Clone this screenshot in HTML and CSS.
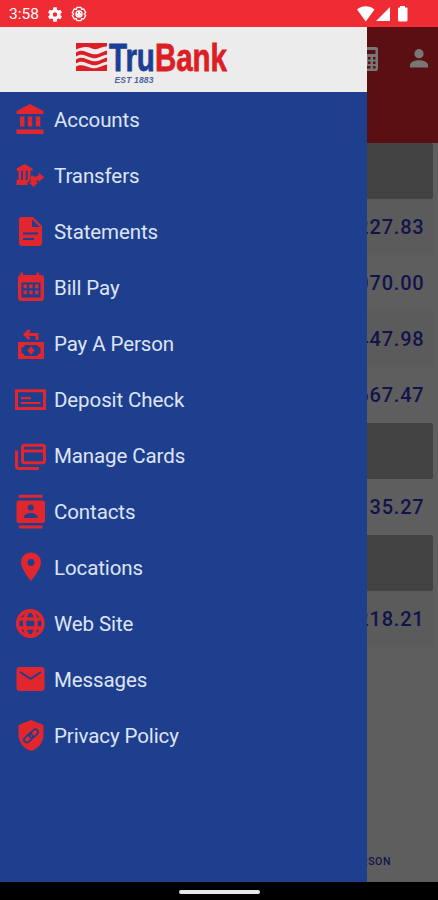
FILE: index.html
```html
<!DOCTYPE html>
<html lang="en">
<head>
    <meta charset="UTF-8">
    <meta name="viewport" content="width=device-width, initial-scale=1.0">
    <title>TruBank</title>
    <link rel="stylesheet" href="styles.css">
</head>
<body>
    <div class="phone">
        <!-- Status Bar -->
        <div class="status-bar">
            <span class="time">3:58</span>
            <svg class="gear" width="16" height="17" viewBox="1 1 22 22"><path fill-rule="evenodd" d="M19.4 13a7 7 0 0 0 0-2l2.2-1.700-2.200-4-2.800 1.100a8 8 0 0 0-1.800-1L14.400 2H9.600l-.4 3.400a8 8 0 0 0-1.800 1L4.600 5.300l-2.200 4L4.600 11a7 7 0 0 0 0 2l-2.200 1.700 2.200 4 2.800-1.100a8 8 0 0 0 1.800 1l.4 3.400h4.800l.4-3.400a8 8 0 0 0 1.800-1l2.800 1.100 2.200-4zM12 9a3 3 0 1 1 0 6 3 3 0 0 1 0-6z"/></svg>
            <svg class="gear second" width="16" height="16" viewBox="0 0 24 24"><path class="gear-line" d="M9 2h6l1 3 3-.5 3 5-2 2.500 2 2.500-3 5-3-.5-1 3H9l-1-3-3 .5-3-5L4 12 2 9.500l3-5 3 .5z"/><circle class="gear-line" cx="12" cy="12" r="4.500"/><path d="M12 7l3 5 2 2-5 1-5-1 3-3z"/></svg>
            <svg class="signals" width="52" height="16" viewBox="0 0 52 16"><path d="M0 3.500C5-.8 12.500-.8 17.500 3.500L8.800 15.500zM33 1v14H19zM43 1.500V0h5v1.500h1.500q1 0 1 1V14q0 1.500-1.500 1.500h-6.500Q41 15.500 41 14V2.500q0-1 1-1z"/></svg>
        </div>

        <div class="screen">
            <!-- Accounts page, dimmed behind the menu -->
            <div class="page">
                <div class="page-header">
                    <svg width="18" height="24" viewBox="0 0 18 24"><path fill-rule="evenodd" d="M2 0h14q2 0 2 2v20q0 2-2 2H2q-2 0-2-2V2q0-2 2-2zM2.500 3v4h13V3zM3 10v2.500h2.500V10zM8 10v2.500h2.500V10zM13 10v2.500h2.500V10zM3 14.500V17h2.500v-2.500zM8 14.500V17h2.500v-2.500zM13 14.500V17h2.500v-2.500zM3 19v2.500h7.500V19zM13 19v2.500h2.500V19z"/></svg>
                    <svg width="18" height="19" viewBox="0 0 18 19"><circle cx="9" cy="4.700" r="4.600"/><path d="M0 18.500v-2.300c0-3.200 5-5 9-5s9 1.800 9 5v2.300z"/></svg>
                </div>
                <div class="accounts">
                    <div class="group"></div>
                    <div class="account shaded">$4,227.83</div>
                    <div class="account">$1,070.00</div>
                    <div class="account shaded">$2,447.98</div>
                    <div class="account">$5,667.47</div>
                    <div class="group"></div>
                    <div class="account">$3,135.27</div>
                    <div class="group"></div>
                    <div class="account shaded">$8,218.21</div>
                </div>
                <div class="tab">PAY A PERSON</div>
            </div>

            <!-- Menu -->
            <div class="drawer">
                <div class="drawer-header">
                    <svg class="logo" width="153" height="42" viewBox="0 0 153 42">
                        <path class="flag" d="M0 0h31v3.500C25 3 22 8 16 5.500S6 4 0 6.500zM0 9.500c6-4 10 0 16 1.500s9-2 15-3.500v4c-6 1-9 5-15 3.500S6 9.500 0 13.500zM0 16.500c6-4 10 0 16 1.500s9-2 15-3.500v4c-6 1-9 5-15 3.500S6 16.500 0 20.500zM0 23.500c6-3 10 .500 16 1.500s9-2 15-3.500V28H0z"/>
                        <text class="brand" x="33" y="27.700" textLength="118" lengthAdjust="spacingAndGlyphs"><tspan class="tru">Tru</tspan><tspan class="bank">Bank</tspan></text>
                        <text class="est" x="38.500" y="39.500" textLength="39">EST 1883</text>
                    </svg>
                </div>
                <div class="menu">
                    <div class="item">
                        <svg class="icon" viewBox="0 0 32 36"><path d="M15 2l13.500 7v3h-27V9zM5 14.500h4.500v10H5zM12.800 14.500h4.500v10h-4.500zM20.800 14.500h4.500v10h-4.500zM1.500 27.500h27V32h-27z"/></svg>
                        <span>Accounts</span>
                    </div>
                    <div class="item">
                        <svg class="icon" viewBox="0 0 32 36"><path d="M9.500 6l8 4.500v2.200h-16v-2.200zM3.500 12.700h2.700V22H3.500zM8 12.700h2.700V22H8zM12.700 12.700h2.700V22h-2.700zM1.500 23.500h11V27h-11zM1.500 22h13v2h-13zM17 17l3 2 3.500-1.500v-3l5.800 4.700-5.800 4.800V22l-2 .5v2h2L18.500 29 13.800 24.500h2V19z"/></svg>
                        <span>Transfers</span>
                    </div>
                    <div class="item">
                        <svg class="icon" viewBox="0 0 32 36"><path d="M6.500 3H18l9 9v17q0 3-3 3H7q-3 0-3-3V6q0-3 2.500-3z"/><path class="cut" d="M17 5.200V13h8z"/><path class="cut-line" d="M8 19.500h15M8 25h11"/></svg>
                        <span>Statements</span>
                    </div>
                    <div class="item">
                        <svg class="icon" viewBox="0 0 32 36"><path fill-rule="evenodd" d="M5.500 2.500H8V5h13.500V2.500H24V5h2q3 0 3 3v20q0 3-3 3H6q-3 0-3-3V8q0-3 2.500-3zM6.500 12.500v15h19v-15z"/><path d="M8.500 14.500h3.500v3.700H8.500zM14.200 14.500h3.500v3.700h-3.500zM20 14.500h3.500v3.700H20zM8.500 20.500h3.500v3.700H8.500zM14.200 20.500h3.500v3.700h-3.500zM20 20.500h3.500v3.700H20z"/></svg>
                        <span>Bill Pay</span>
                    </div>
                    <div class="item">
                        <svg class="icon" viewBox="0 0 32 36"><path d="M3 16h26v17H3z"/><path class="cut" d="M10 19h12q1 2.500 3.500 3v5Q23 27.500 22 30H10q-1-2.500-3.500-3v-5Q9 21.500 10 19z"/><path d="M16 20l3.500 4.500L16 29l-3.500-4.500z"/><path class="line" d="M14.500 4l-4.500 4.500 4.500 4.500M10.500 8.500H22V14"/></svg>
                        <span>Pay A Person</span>
                    </div>
                    <div class="item">
                        <svg class="icon" viewBox="0 0 32 36"><path class="line" d="M1.500 8.700h28v17.800h-28z"/><path class="thin" d="M6 16.200h10M6 21h19.500"/></svg>
                        <span>Deposit Check</span>
                    </div>
                    <div class="item">
                        <svg class="icon" viewBox="0 0 32 36"><rect class="line" x="7.500" y="7.300" width="22" height="17.500" rx="2"/><path class="line" d="M8 13h21M1.500 12.500v15.500q0 2.500 2.500 2.500h20"/></svg>
                        <span>Manage Cards</span>
                    </div>
                    <div class="item">
                        <svg class="icon" viewBox="0 0 32 36"><path d="M4 .8h23.500v3H4zM4 31.500h23.500v3H4z"/><rect x="1.500" y="6.500" width="28.500" height="22.500" rx="2.500"/><circle class="cut" cx="15.800" cy="13.500" r="3"/><path class="cut" d="M9 24v-1c0-2.500 4-4 6.800-4s6.800 1.500 6.800 4v1z"/></svg>
                        <span>Contacts</span>
                    </div>
                    <div class="item">
                        <svg class="icon" viewBox="0 0 32 36"><path fill-rule="evenodd" d="M16 2.500c5.600 0 10 4.300 10 9.800C26 19.500 16 31 16 31S6 19.500 6 12.300c0-5.500 4.400-9.800 10-9.800zm0 6.500a3.400 3.400 0 1 0 0 6.800A3.400 3.400 0 0 0 16 9z"/></svg>
                        <span>Locations</span>
                    </div>
                    <div class="item">
                        <svg class="icon" viewBox="0 0 32 36"><circle class="globe" cx="15.300" cy="17.500" r="12.700"/><ellipse class="globe" cx="15.300" cy="17.500" rx="5.800" ry="12.700"/><path class="globe" d="M3.800 13h23M3.800 22h23"/></svg>
                        <span>Web Site</span>
                    </div>
                    <div class="item">
                        <svg class="icon" viewBox="0 0 32 36"><rect x="1.500" y="5" width="28" height="24" rx="3"/><path class="cut-line" d="M5 10l10.500 6.800L26 10"/></svg>
                        <span>Messages</span>
                    </div>
                    <div class="item">
                        <svg class="icon" viewBox="0 0 32 36"><path d="M16 2l12.500 5v9.500c0 8-5 14-12.500 16.500C8.500 30.500 3.500 24.500 3.500 16.500V7z"/><g transform="rotate(-42 16 18)"><rect class="link" x="7.500" y="15.200" width="10" height="5.500" rx="2.700"/><rect class="link" x="14.500" y="15.200" width="10" height="5.500" rx="2.700"/></g></svg>
                        <span>Privacy Policy</span>
                    </div>
                </div>
            </div>
        </div>

        <!-- Navigation Bar -->
        <div class="nav-bar">
            <div class="handle"></div>
        </div>
    </div>
</body>
</html>
```
FILE: styles.css
```css
body {
    margin: 0;
    font-family: Roboto, "Liberation Sans", sans-serif;
    background-color: #000;
}

.phone {
    display: flex;
    flex-direction: column;
    width: 438px;
    height: 900px;
    overflow: hidden;
}

.status-bar {
    display: flex;
    align-items: center;
    box-sizing: border-box;
    height: 27px;
    padding: 1px 29px 0 9px;
    background-color: #ef2b33;
    color: #fff;
}

.status-bar svg {
    fill: #fff;
}

.time {
    width: 31px;
    font-size: 15.500px;
    line-height: 27px;
}

.gear {
    margin-left: 7px;
}

.gear.second {
    margin-left: 8px;
}

.gear-line {
    fill: none;
    stroke: #fff;
    stroke-width: 2;
}

.signals {
    margin-left: auto;
}

.screen {
    position: relative;
    height: 855px;
}

.page {
    display: flex;
    flex-direction: column;
    height: 855px;
    background-color: #5e5e5e;
}

.page-header {
    display: flex;
    justify-content: flex-end;
    gap: 32px;
    box-sizing: border-box;
    height: 116px;
    padding: 20px 10px 0 0;
    background-color: #5a0f12;
}

.page-header svg {
    fill: #777;
}

.page-header svg + svg {
    margin-top: 2px;
}

.accounts {
    flex: 1;
    padding-right: 5px;
}

.group {
    height: 56px;
    background-color: #434343;
    border-radius: 0 2px 2px 0;
}

.account {
    height: 56px;
    padding-right: 8.500px;
    color: #13134b;
    font-size: 20px;
    font-weight: 500;
    letter-spacing: 0.8px;
    line-height: 57px;
    text-align: right;
}

.shaded {
    background-color: #5b5b5b;
}

.tab {
    padding-right: 47px;
    color: #13134b;
    font-size: 10.500px;
    font-weight: 500;
    letter-spacing: 0.6px;
    line-height: 40px;
    text-align: right;
}

.drawer {
    position: absolute;
    top: 0;
    left: 0;
    width: 367px;
    height: 855px;
    background-color: #1e3f8e;
}

.drawer-header {
    box-sizing: border-box;
    height: 65px;
    padding: 16px 0 0 76px;
    background-color: #ececec;
}

.logo {
    display: block;
    overflow: visible;
}

.flag {
    fill: #dc1f26;
}

.brand {
    font-family: "Liberation Sans", Arial, sans-serif;
    font-size: 39px;
    font-weight: bold;
    stroke-width: 0.8;
}

.tru {
    fill: #1b3f94;
    stroke: #1b3f94;
}

.bank {
    fill: #dc1f26;
    stroke: #dc1f26;
}

.est {
    fill: #4f629c;
    font-family: "Liberation Sans", Arial, sans-serif;
    font-size: 8.500px;
    font-style: italic;
    font-weight: bold;
}

.item {
    display: flex;
    align-items: center;
    gap: 7px;
    height: 56px;
    padding-left: 15px;
    color: #dfe4f4;
    font-size: 20.500px;
    letter-spacing: -0.1px;
}

.icon {
    width: 32px;
    height: 36px;
    fill: #e2262d;
}

.line,
.thin,
.globe {
    fill: none;
    stroke: #e2262d;
    stroke-width: 3;
}

.thin {
    stroke-width: 2.200;
}

.globe {
    stroke-width: 3.400;
}

.cut {
    fill: #1e3f8e;
}

.cut-line,
.link {
    fill: none;
    stroke: #1e3f8e;
    stroke-width: 2;
}

.link {
    stroke-width: 1.700;
}

.nav-bar {
    display: flex;
    justify-content: center;
    align-items: center;
    height: 18px;
    background-color: #000;
}

.handle {
    width: 81px;
    height: 4px;
    margin-top: 2px;
    border-radius: 2px;
    background-color: #e8e8e8;
}
```
